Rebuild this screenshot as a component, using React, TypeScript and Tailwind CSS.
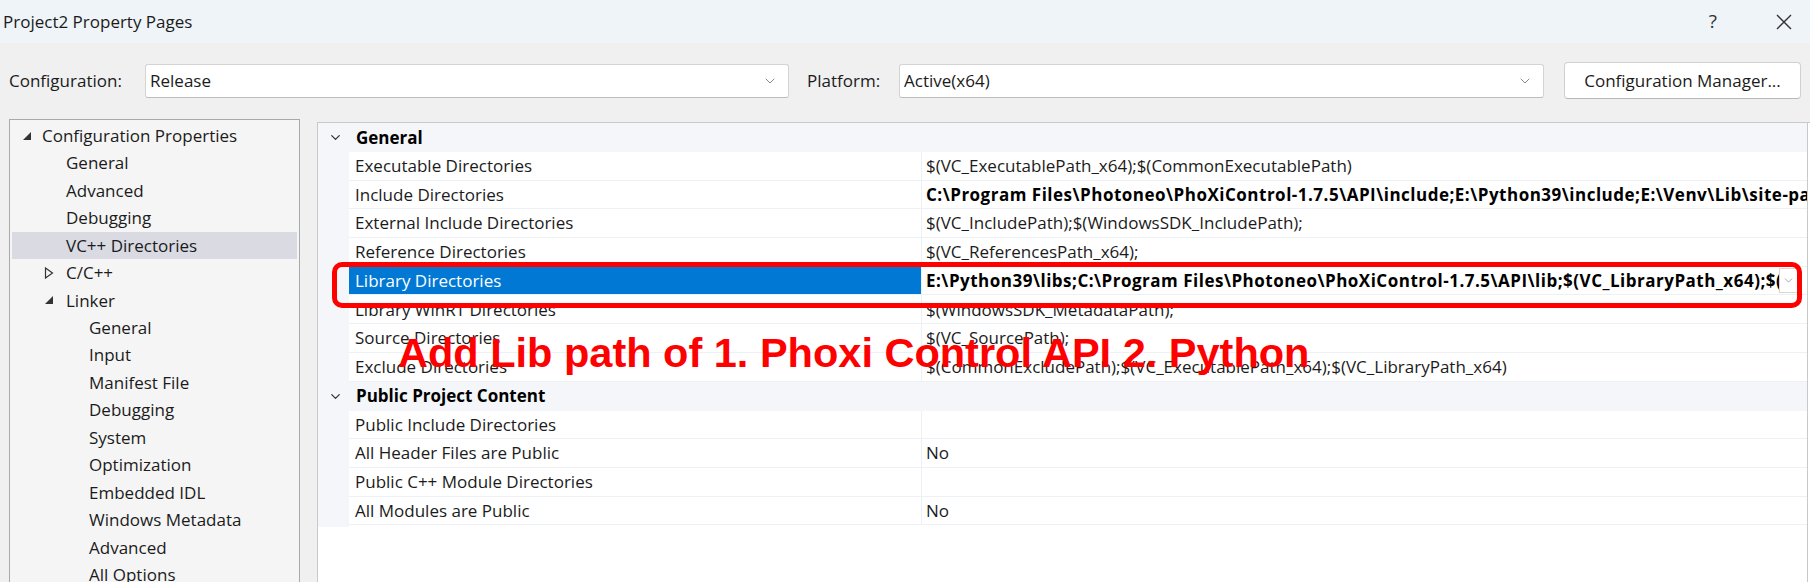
import { ChevronDown } from "lucide-react";

const ui = { fontFamily: '"Open Sans", "Noto Sans", sans-serif' };

const tree = [
  { label: "Configuration Properties", level: 0, arrow: "open" },
  { label: "General", level: 1 },
  { label: "Advanced", level: 1 },
  { label: "Debugging", level: 1 },
  { label: "VC++ Directories", level: 1, selected: true },
  { label: "C/C++", level: 1, arrow: "closed" },
  { label: "Linker", level: 1, arrow: "open" },
  { label: "General", level: 2 },
  { label: "Input", level: 2 },
  { label: "Manifest File", level: 2 },
  { label: "Debugging", level: 2 },
  { label: "System", level: 2 },
  { label: "Optimization", level: 2 },
  { label: "Embedded IDL", level: 2 },
  { label: "Windows Metadata", level: 2 },
  { label: "Advanced", level: 2 },
  { label: "All Options", level: 2 },
];

const general = [
  { name: "Executable Directories", value: "$(VC_ExecutablePath_x64);$(CommonExecutablePath)" },
  {
    name: "Include Directories",
    value:
      "C:\\Program Files\\Photoneo\\PhoXiControl-1.7.5\\API\\include;E:\\Python39\\include;E:\\Venv\\Lib\\site-packages\\numpy\\core\\include;$(IncludePath)",
    bold: true,
  },
  { name: "External Include Directories", value: "$(VC_IncludePath);$(WindowsSDK_IncludePath);" },
  { name: "Reference Directories", value: "$(VC_ReferencesPath_x64);" },
  {
    name: "Library Directories",
    value:
      "E:\\Python39\\libs;C:\\Program Files\\Photoneo\\PhoXiControl-1.7.5\\API\\lib;$(VC_LibraryPath_x64);$(WindowsSDK_LibraryPath_x64)",
    bold: true,
    selected: true,
  },
  { name: "Library WinRT Directories", value: "$(WindowsSDK_MetadataPath);" },
  { name: "Source Directories", value: "$(VC_SourcePath);" },
  { name: "Exclude Directories", value: "$(CommonExcludePath);$(VC_ExecutablePath_x64);$(VC_LibraryPath_x64)" },
];

const publicContent = [
  { name: "Public Include Directories", value: "" },
  { name: "All Header Files are Public", value: "No" },
  { name: "Public C++ Module Directories", value: "" },
  { name: "All Modules are Public", value: "No" },
];

function Combo({ value, width }: { value: string; width: string }) {
  return (
    <div
      className={`flex h-[34px] ${width} items-center justify-between rounded-[3px] border border-[#d4d4d4] border-b-[#bdbdbd] bg-white pl-[4px] pr-[10px]`}
    >
      <span>{value}</span>
      <ChevronDown size={16} strokeWidth={1.2} className="text-[#6b6b6b]" />
    </div>
  );
}

function Arrow({ kind }: { kind?: string }) {
  if (kind === "open")
    return (
      <svg width="10" height="10" viewBox="0 0 10 10">
        <polygon points="9,1 9,9 1,9" fill="#333" />
      </svg>
    );
  if (kind === "closed")
    return (
      <svg width="10" height="12" viewBox="0 0 10 12">
        <polygon points="1.5,1 8.5,6 1.5,11" fill="none" stroke="#333" strokeWidth="1.2" />
      </svg>
    );
  return null;
}

function Header({ title }: { title: string }) {
  return (
    <div className="flex h-[29px] items-center bg-[#f4f6fa]">
      <div className="flex w-[31px] justify-center pl-[3px]">
        <ChevronDown size={15} strokeWidth={2} className="text-[#333]" />
      </div>
      <span className="pl-[7px] font-bold text-black">{title}</span>
    </div>
  );
}

function Row({ name, value, bold, selected }: { name: string; value: string; bold?: boolean; selected?: boolean }) {
  return (
    <div className="flex h-[28.7px]">
      <div className="w-[31px] shrink-0 bg-[#f4f6fa]" />
      <div
        className={`flex w-[572px] shrink-0 items-center border-b border-[#edf0f5] pl-[6px] ${
          selected ? "bg-[#0078d4] text-white" : "bg-white"
        }`}
      >
        {name}
      </div>
      <div className="flex min-w-0 flex-1 items-center border-b border-l border-[#edf0f5] bg-white pl-[4px]">
        <span
          className={`overflow-hidden whitespace-nowrap ${bold ? "font-bold tracking-[0.5px] text-black" : ""}`}
        >
          {value}
        </span>
        {selected && (
          <div className="ml-auto mr-[9px] flex h-[25px] w-[19px] shrink-0 items-center justify-center border border-[#d6d6d6] bg-white">
            <ChevronDown size={13} strokeWidth={1.2} className="text-[#777]" />
          </div>
        )}
      </div>
    </div>
  );
}

export default function App() {
  return (
    <div
      className="relative flex h-[582px] w-[1810px] flex-col overflow-hidden bg-[#f0f0f0] text-[17px] text-[#1b1b1b]"
      style={ui}
    >
      {/* title bar */}
      <div className="flex h-[43px] shrink-0 items-center bg-[#eff4f9] pl-[3px]">
        <span className="text-[17px]">Project2 Property Pages</span>
        <span className="ml-auto mr-[59px] text-[19px] text-[#333]">?</span>
        <svg width="16" height="16" viewBox="0 0 16 16" className="mr-[18px]">
          <path d="M1 1 L15 15 M15 1 L1 15" stroke="#333" strokeWidth="1.4" />
        </svg>
      </div>

      {/* configuration bar */}
      <div className="mt-[19px] flex h-[37px] shrink-0 items-center pl-[9px]">
        <span className="w-[136px]">Configuration:</span>
        <Combo value="Release" width="w-[644px]" />
        <span className="ml-[18px] w-[92px]">Platform:</span>
        <Combo value="Active(x64)" width="w-[645px]" />
        <div className="ml-[20px] flex h-[37px] w-[237px] items-center justify-center rounded-[4px] border border-[#d0d0d0] border-b-[#b8b8b8] bg-white">
          Configuration Manager...
        </div>
      </div>

      {/* body */}
      <div className="mt-[20px] flex flex-1 items-start">
        <div className="ml-[9px] h-[480px] w-[291px] shrink-0 border border-[#a9a9a9] bg-[#f5f5f5] pt-[2px]">
          {tree.map((t, i) => (
            <div
              key={i}
              className={`mx-[2px] flex h-[27.45px] items-center ${t.selected ? "bg-[#d9dae2]" : ""}`}
            >
              <div
                className={`flex shrink-0 items-center ${
                  t.level === 0 ? "w-[30px] pl-[10px]" : t.level === 1 ? "w-[54px] pl-[32px]" : "w-[77px]"
                }`}
              >
                <Arrow kind={t.arrow} />
              </div>
              <span className="whitespace-nowrap">{t.label}</span>
            </div>
          ))}
        </div>

        <div className="ml-[17px] mt-[3px] h-[480px] min-w-0 flex-1 border border-r-0 border-[#c9c9c9] bg-white">
          <div className="mr-[2px] h-full border-r border-[#c9c9c9]">
            <Header title="General" />
            {general.map((r) => (
              <Row key={r.name} {...r} />
            ))}
            <Header title="Public Project Content" />
            {publicContent.map((r) => (
              <Row key={r.name} {...r} />
            ))}
            <div className="flex h-[2px]">
              <div className="w-[31px] bg-[#f4f6fa]" />
            </div>
          </div>
        </div>
      </div>

      {/* annotation */}
      <div className="absolute left-[332px] top-[262px] h-[46px] w-[1470px] rounded-[10px] border-[5px] border-[#ff0000]" />
      <div
        className="absolute left-[398px] top-[332px] whitespace-nowrap text-[41.5px] font-bold leading-[41.5px] text-[#ff0000]"
        style={{ fontFamily: '"Liberation Sans", Arial, sans-serif' }}
      >
        Add Lib path of 1. Phoxi Control API 2. Python
      </div>
    </div>
  );
}
